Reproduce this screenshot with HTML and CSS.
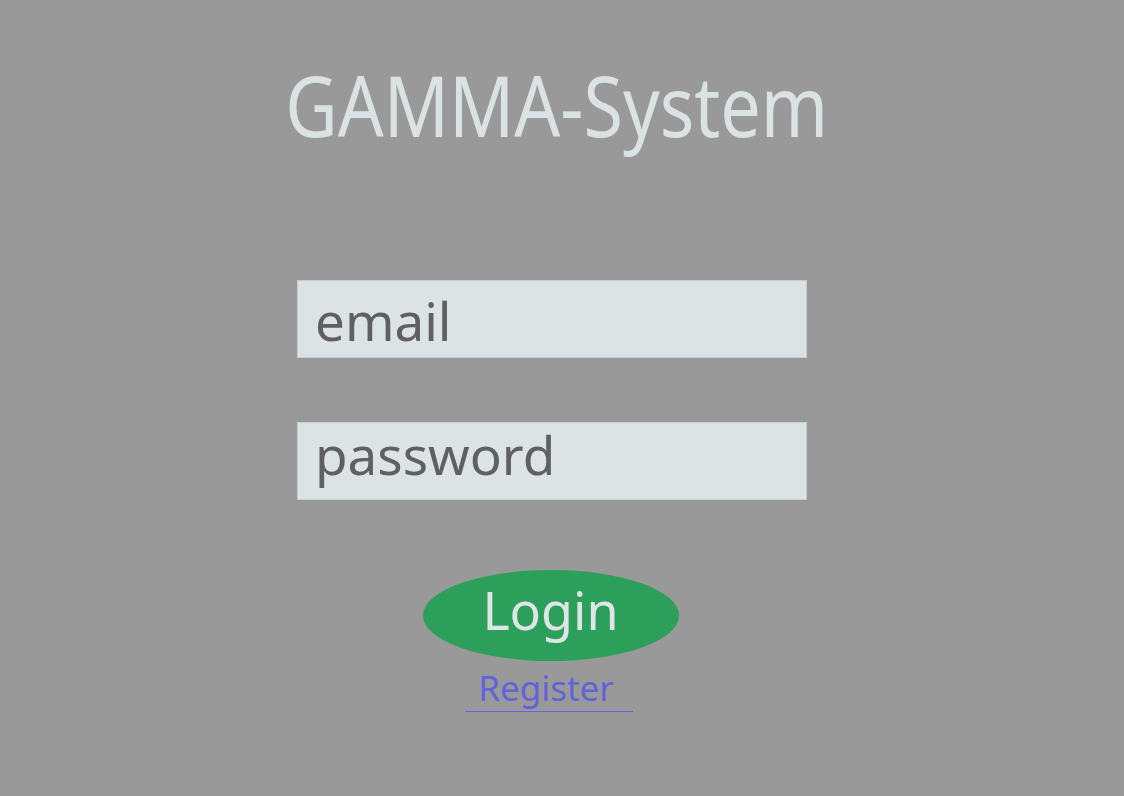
FILE: index.html
```html
<!DOCTYPE html>
<html lang="en">
<head>
<meta charset="utf-8">
<title>GAMMA-System</title>
<link rel="stylesheet" href="styles.css">
</head>
<body>
<main class="page">
  <h1 class="title">GAMMA-System</h1>
  <div class="field field-email">email</div>
  <div class="field field-password">password</div>
  <button class="login" type="button">Login</button>
  <a class="register" href="#">Register</a>
</main>
</body>
</html>
```

FILE: styles.css
```css
html, body {
  margin: 0;
  padding: 0;
}

body {
  background: #999999;
  font-family: "Noto Sans", "Open Sans", sans-serif;
}

.page {
  height: 796px;
  display: flex;
  flex-direction: column;
  align-items: center;
  overflow: hidden;
}

.title {
  margin: 63px 10px 0 0;
  font-size: 84px;
  line-height: 84px;
  font-weight: 400;
  color: #dae2e3;
  white-space: nowrap;
  transform: scaleX(0.857);
}

.field {
  box-sizing: border-box;
  width: 510px;
  height: 78px;
  margin-right: 20px;
  padding-left: 17px;
  background: #dbe3e4;
  border: 1px solid #c6ced0;
  color: #606060;
  font-size: 53px;
  line-height: 53px;
}

.field-email {
  margin-top: 133px;
  padding-top: 13px;
}

.field-password {
  margin-top: 64px;
  padding-top: 5px;
}

.login {
  box-sizing: border-box;
  width: 256px;
  height: 91px;
  margin: 70px 23px 0 0;
  padding: 14px 0 0;
  border: none;
  border-radius: 50%;
  background: #2ca05a;
  color: #dde5e6;
  font-family: inherit;
  font-size: 52px;
  line-height: 52px;
  display: flex;
  justify-content: center;
  align-items: flex-start;
}

.register {
  margin: 9px 26px 0 0;
  padding: 0 19px 6px 13px;
  border-bottom: 1px solid #6464e0;
  color: #6363d9;
  font-size: 35px;
  line-height: 35px;
  text-decoration: none;
}
```
